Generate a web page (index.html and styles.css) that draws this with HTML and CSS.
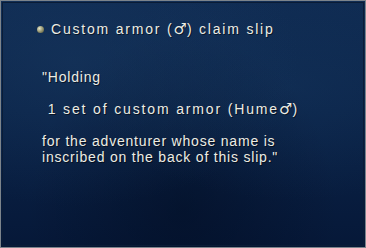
FILE: index.html
```html
<!DOCTYPE html>
<html lang="en">
<head>
    <meta charset="UTF-8">
    <title>Custom armor claim slip</title>
    <link rel="stylesheet" href="styles.css">
</head>
<body>
    <div class="window">
        <div class="title"><span class="orb"></span>Custom armor (<span class="sym">♂</span>) claim slip</div>
        <div class="desc">
            <p>"Holding</p>
            <p class="gap wide">&nbsp;1 set of custom armor (Hume<span class="sym">♂</span>)</p>
            <p class="gap">for the adventurer whose name is</p>
            <p>inscribed on the back of this slip."</p>
        </div>
    </div>
</body>
</html>
```

FILE: styles.css
```css
html, body {
    margin: 0;
    padding: 0;
}
body {
    width: 366px;
    height: 248px;
    overflow: hidden;
    font-family: "Liberation Sans", Arial, sans-serif;
    color: #ecece4;
}
.window {
    box-sizing: border-box;
    width: 366px;
    height: 248px;
    border: 1px solid #7c848c;
    outline: 1px solid #0a1c36;
    outline-offset: -3px;
    background:
        radial-gradient(ellipse at 20% 25%, rgba(30, 65, 105, 0.35), transparent 55%),
        radial-gradient(ellipse at 80% 35%, rgba(25, 60, 100, 0.3), transparent 50%),
        radial-gradient(ellipse at 50% 85%, rgba(0, 8, 25, 0.4), transparent 60%),
        linear-gradient(180deg, #0f2b52 0%, #0b2449 45%, #061838 100%);
    padding: 18px 0 0 36px;
    text-shadow: 1px 1px 0 rgba(0, 0, 0, 0.55);
}
.title {
    display: flex;
    align-items: center;
    font-size: 14px;
    letter-spacing: 1.8px;
    line-height: 20px;
}
.orb {
    width: 7px;
    height: 7px;
    border-radius: 50%;
    margin-right: 7px;
    background: radial-gradient(circle at 35% 35%, #e6e6c8, #8f8f6a 55%, #4a4a30);
}
.sym {
    font-family: "DejaVu Sans", sans-serif;
    font-size: 15px;
    letter-spacing: 0;
    line-height: 0;
}
.desc {
    margin-top: 30px;
    padding-left: 5px;
    font-size: 14px;
    letter-spacing: 0.8px;
    line-height: 16px;
}
.desc p {
    margin: 0;
    white-space: pre;
}
.desc .gap {
    margin-top: 16px;
}
.desc .wide {
    letter-spacing: 1.85px;
}
```
